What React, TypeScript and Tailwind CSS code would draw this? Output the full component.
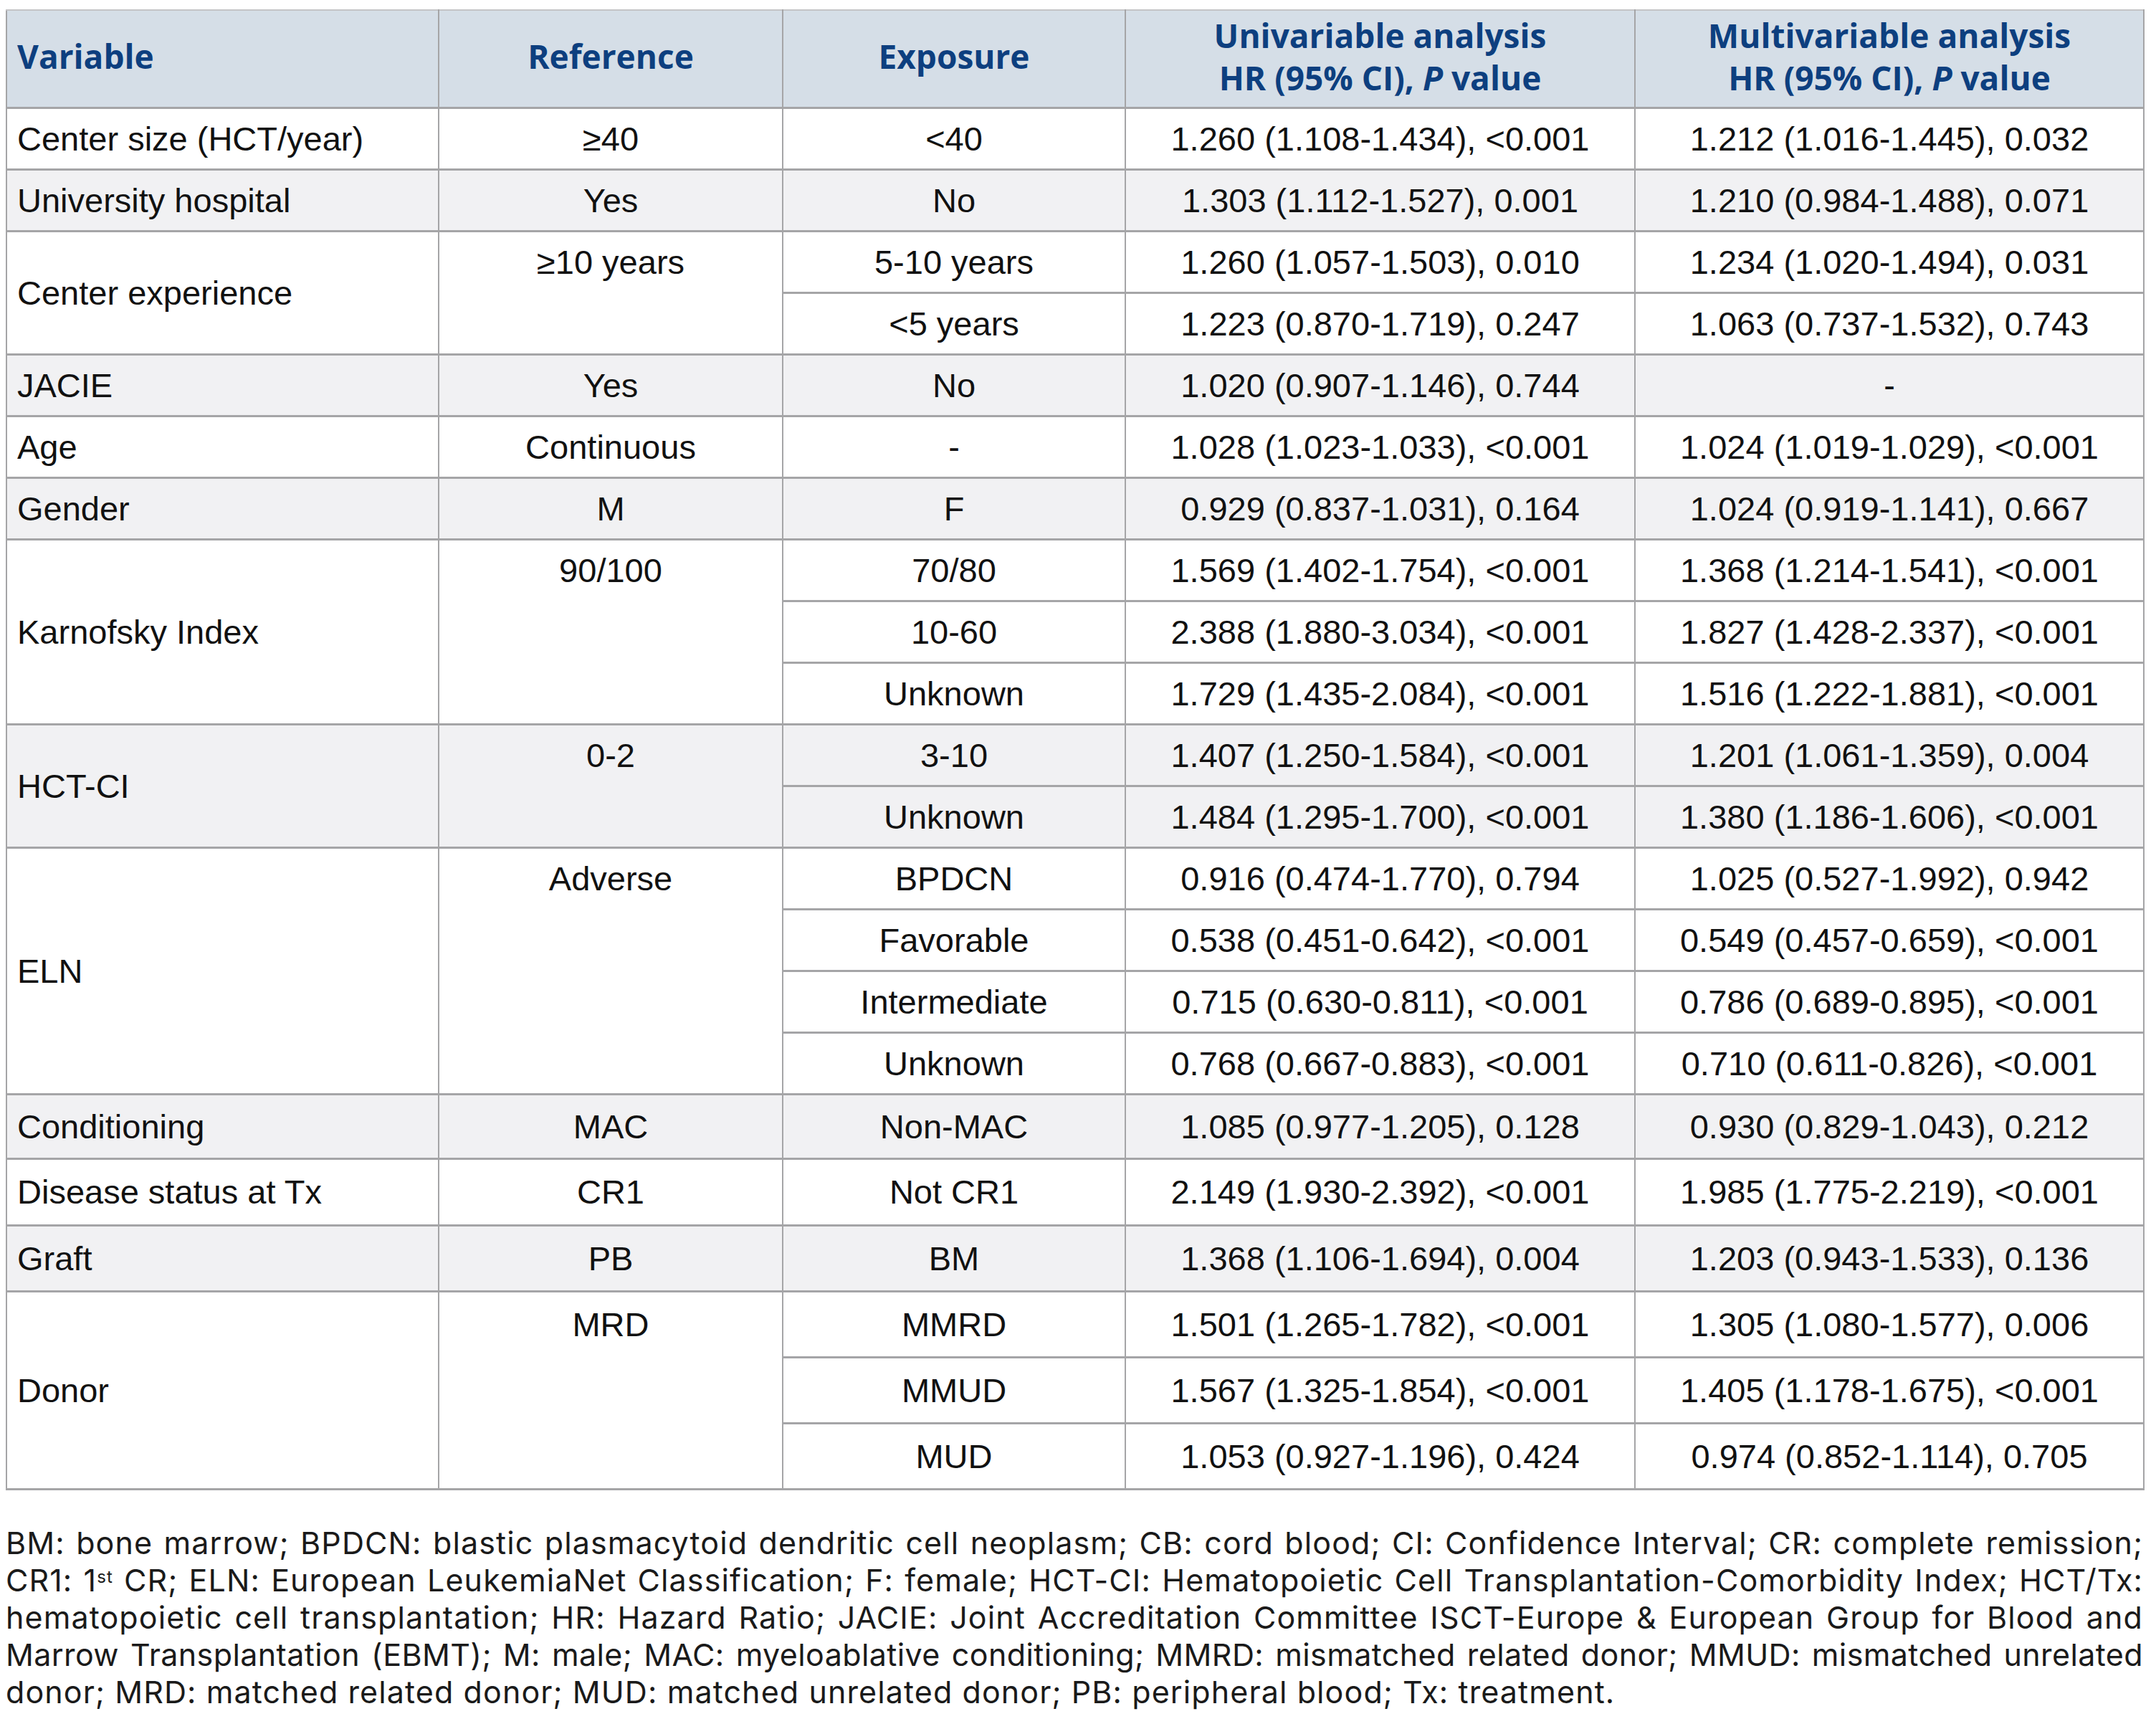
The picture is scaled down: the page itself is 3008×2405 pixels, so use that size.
import React from "react";

type Sub = { exp: string; uni: string; multi: string };
type Group = { variable: string; ref: string; gray: boolean; h: number[]; subs: Sub[] };

const groups: Group[] = [
  { variable: "Center size (HCT/year)", ref: "≥40", gray: false, h: [86], subs: [{ exp: "<40", uni: "1.260 (1.108-1.434), <0.001", multi: "1.212 (1.016-1.445), 0.032" }] },
  { variable: "University hospital", ref: "Yes", gray: true, h: [86], subs: [{ exp: "No", uni: "1.303 (1.112-1.527), 0.001", multi: "1.210 (0.984-1.488), 0.071" }] },
  {
    variable: "Center experience", ref: "≥10 years", gray: false, h: [86, 86],
    subs: [
      { exp: "5-10 years", uni: "1.260 (1.057-1.503), 0.010", multi: "1.234 (1.020-1.494), 0.031" },
      { exp: "<5 years", uni: "1.223 (0.870-1.719), 0.247", multi: "1.063 (0.737-1.532), 0.743" },
    ],
  },
  { variable: "JACIE", ref: "Yes", gray: true, h: [86], subs: [{ exp: "No", uni: "1.020 (0.907-1.146), 0.744", multi: "-" }] },
  { variable: "Age", ref: "Continuous", gray: false, h: [86], subs: [{ exp: "-", uni: "1.028 (1.023-1.033), <0.001", multi: "1.024 (1.019-1.029), <0.001" }] },
  { variable: "Gender", ref: "M", gray: true, h: [86], subs: [{ exp: "F", uni: "0.929 (0.837-1.031), 0.164", multi: "1.024 (0.919-1.141), 0.667" }] },
  {
    variable: "Karnofsky Index", ref: "90/100", gray: false, h: [86, 86, 86],
    subs: [
      { exp: "70/80", uni: "1.569 (1.402-1.754), <0.001", multi: "1.368 (1.214-1.541), <0.001" },
      { exp: "10-60", uni: "2.388 (1.880-3.034), <0.001", multi: "1.827 (1.428-2.337), <0.001" },
      { exp: "Unknown", uni: "1.729 (1.435-2.084), <0.001", multi: "1.516 (1.222-1.881), <0.001" },
    ],
  },
  {
    variable: "HCT-CI", ref: "0-2", gray: true, h: [86, 86],
    subs: [
      { exp: "3-10", uni: "1.407 (1.250-1.584), <0.001", multi: "1.201 (1.061-1.359), 0.004" },
      { exp: "Unknown", uni: "1.484 (1.295-1.700), <0.001", multi: "1.380 (1.186-1.606), <0.001" },
    ],
  },
  {
    variable: "ELN", ref: "Adverse", gray: false, h: [86, 86, 86, 86],
    subs: [
      { exp: "BPDCN", uni: "0.916 (0.474-1.770), 0.794", multi: "1.025 (0.527-1.992), 0.942" },
      { exp: "Favorable", uni: "0.538 (0.451-0.642), <0.001", multi: "0.549 (0.457-0.659), <0.001" },
      { exp: "Intermediate", uni: "0.715 (0.630-0.811), <0.001", multi: "0.786 (0.689-0.895), <0.001" },
      { exp: "Unknown", uni: "0.768 (0.667-0.883), <0.001", multi: "0.710 (0.611-0.826), <0.001" },
    ],
  },
  { variable: "Conditioning", ref: "MAC", gray: true, h: [90], subs: [{ exp: "Non-MAC", uni: "1.085 (0.977-1.205), 0.128", multi: "0.930 (0.829-1.043), 0.212" }] },
  { variable: "Disease status at Tx", ref: "CR1", gray: false, h: [93], subs: [{ exp: "Not CR1", uni: "2.149 (1.930-2.392), <0.001", multi: "1.985 (1.775-2.219), <0.001" }] },
  { variable: "Graft", ref: "PB", gray: true, h: [92], subs: [{ exp: "BM", uni: "1.368 (1.106-1.694), 0.004", multi: "1.203 (0.943-1.533), 0.136" }] },
  {
    variable: "Donor", ref: "MRD", gray: false, h: [92, 92, 92],
    subs: [
      { exp: "MMRD", uni: "1.501 (1.265-1.782), <0.001", multi: "1.305 (1.080-1.577), 0.006" },
      { exp: "MMUD", uni: "1.567 (1.325-1.854), <0.001", multi: "1.405 (1.178-1.675), <0.001" },
      { exp: "MUD", uni: "1.053 (0.927-1.196), 0.424", multi: "0.974 (0.852-1.114), 0.705" },
    ],
  },
];

const cell = "border-x-2 border-y-[3px] border-[#a5a5a7] p-0";
const th =
  "border-x-2 border-y-[3px] border-[#a5a5a7] border-t-2 border-t-[#c4c4c6] px-[14px] pb-[6px] font-bold text-[#0d3f7f] text-[46px] leading-[59px] align-middle";

export default function App() {
  return (
    <div className="min-h-screen bg-white pt-[13px] pl-[8px] text-[#111] [font-family:'Liberation_Sans',Arial,sans-serif]">
      <table className="table-fixed border-collapse w-[2982px] text-[47px] leading-none">
        <colgroup>
          <col className="w-[603px]" />
          <col className="w-[480px]" />
          <col className="w-[478px]" />
          <col className="w-[711px]" />
          <col className="w-[710px]" />
        </colgroup>
        <thead>
          <tr className="bg-[#d5dee7] h-[136px] [font-family:'Open_Sans',sans-serif]">
            <th className={`${th} text-left`}>Variable</th>
            <th className={`${th} text-center`}>Reference</th>
            <th className={`${th} text-center`}>Exposure</th>
            <th className={`${th} text-center`}>
              Univariable analysis
              <br />
              HR (95% CI), <i>P</i> value
            </th>
            <th className={`${th} text-center`}>
              Multivariable analysis
              <br />
              HR (95% CI), <i>P</i> value
            </th>
          </tr>
        </thead>
        <tbody>
          {groups.map((g) =>
            g.subs.map((s, i) => (
              <tr key={g.variable + i} className={g.gray ? "bg-[#f1f1f3]" : "bg-white"} style={{ height: g.h[i] }}>
                {i === 0 && (
                  <td rowSpan={g.subs.length} className={`${cell} px-[14px] text-left align-middle`}>
                    {g.variable}
                  </td>
                )}
                {i === 0 && (
                  <td rowSpan={g.subs.length} className={`${cell} text-center align-top`}>
                    <div className="flex items-center justify-center" style={{ height: g.h[0] - 3 }}>
                      {g.ref}
                    </div>
                  </td>
                )}
                <td className={`${cell} text-center align-middle`}>{s.exp}</td>
                <td className={`${cell} text-center align-middle`}>{s.uni}</td>
                <td className={`${cell} text-center align-middle`}>{s.multi}</td>
              </tr>
            ))
          )}
        </tbody>
      </table>

      {/* footnote: one justified line per block so the breaks match */}
      <div className="mt-[47px] w-[2982px] text-[43px] leading-[52px] tracking-[1.1px] text-[#1a1a1a] [font-family:Inter,sans-serif]">
        <div className="h-[52px] text-justify [text-align-last:justify]">
          BM: bone marrow; BPDCN: blastic plasmacytoid dendritic cell neoplasm; CB: cord blood; CI: Confidence Interval; CR: complete remission;
        </div>
        <div className="h-[52px] text-justify [text-align-last:justify]">
          CR1: 1<sup className="text-[24px] leading-none">st</sup> CR; ELN: European LeukemiaNet Classification; F: female; HCT-CI: Hematopoietic Cell Transplantation-Comorbidity Index; HCT/Tx:
        </div>
        <div className="h-[52px] text-justify [text-align-last:justify]">
          hematopoietic cell transplantation; HR: Hazard Ratio; JACIE: Joint Accreditation Committee ISCT-Europe &amp; European Group for Blood and
        </div>
        <div className="h-[52px] tracking-[0.4px] text-justify [text-align-last:justify]">
          Marrow Transplantation (EBMT); M: male; MAC: myeloablative conditioning; MMRD: mismatched related donor; MMUD: mismatched unrelated
        </div>
        <div className="h-[52px] text-left">
          donor; MRD: matched related donor; MUD: matched unrelated donor; PB: peripheral blood; Tx: treatment.
        </div>
      </div>
    </div>
  );
}
